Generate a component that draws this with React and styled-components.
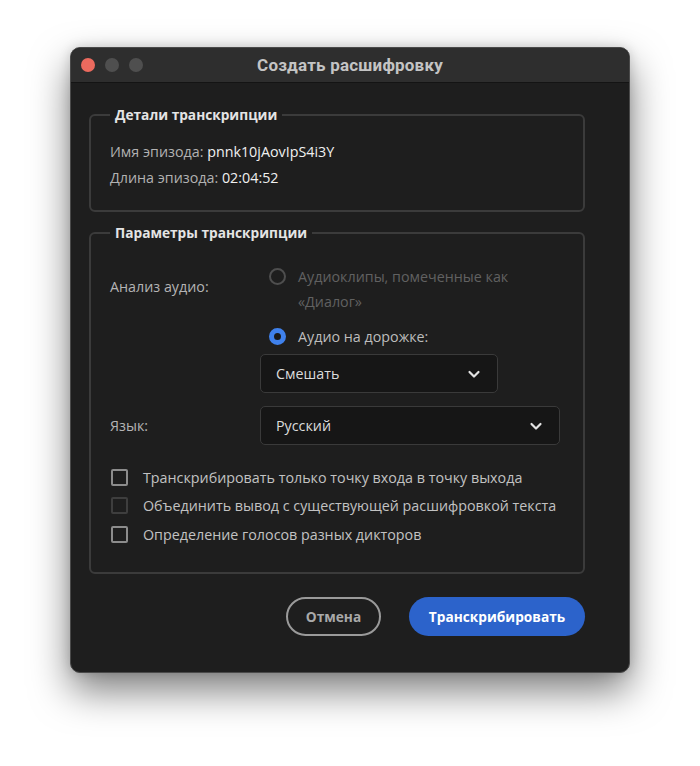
import React from 'react';
import styled, { createGlobalStyle } from 'styled-components';

const GlobalStyle = createGlobalStyle`
  html, body {
    margin: 0;
    background: #ffffff;
    font-family: "Open Sans", "Noto Sans", sans-serif;
  }
`;

const Chevron = () => (
  <svg width="14" height="14" viewBox="0 0 14 14" fill="none">
    <path d="M2.5 5 L7 9.5 L11.5 5" stroke="#e2e2e2" strokeWidth="2.2" strokeLinecap="round" strokeLinejoin="round" />
  </svg>
);

const App = () => (
  <Page>
    <GlobalStyle />
    <Window>
      <TitleBar>
        <Lights>
          <Light color="#ec6a5e" />
          <Light color="#4f4f4f" />
          <Light color="#4f4f4f" />
        </Lights>
        <Title>Создать расшифровку</Title>
      </TitleBar>
      <Body>
        <Group>
          <Legend>Детали транскрипции</Legend>
          <Details>
            <InfoLine>
              Имя эпизода: <Value>pnnk10jAovIpS4i3Y</Value>
            </InfoLine>
            <InfoLine>
              Длина эпизода: <Value>02:04:52</Value>
            </InfoLine>
          </Details>
        </Group>

        <Group params>
          <Legend>Параметры транскрипции</Legend>
          <FormGrid>
            <Label top>Анализ аудио:</Label>
            <Options>
              <Radio disabled>
                <RadioDot disabled />
                <RadioText disabled>
                  Аудиоклипы, помеченные как
                  <br />
                  «Диалог»
                </RadioText>
              </Radio>
              <Radio>
                <RadioDot checked />
                <RadioText>Аудио на дорожке:</RadioText>
              </Radio>
              <Select width={238}>
                <span>Смешать</span>
                <Chevron />
              </Select>
            </Options>
            <Label>Язык:</Label>
            <Select width={300}>
              <span>Русский</span>
              <Chevron />
            </Select>
          </FormGrid>
          <Checks>
            <CheckRow>
              <Box />
              <CheckText>Транскрибировать только точку входа в точку выхода</CheckText>
            </CheckRow>
            <CheckRow>
              <Box disabled />
              <CheckText>Объединить вывод с существующей расшифровкой текста</CheckText>
            </CheckRow>
            <CheckRow>
              <Box />
              <CheckText>Определение голосов разных дикторов</CheckText>
            </CheckRow>
          </Checks>
        </Group>

        <Buttons>
          <GhostButton>Отмена</GhostButton>
          <PrimaryButton>Транскрибировать</PrimaryButton>
        </Buttons>
      </Body>
    </Window>
  </Page>
);

const Page = styled.div`
  padding: 47px 0 0 70px;
  height: 766px;
  box-sizing: border-box;
`;

const Window = styled.div`
  width: 560px;
  height: 626px;
  box-sizing: border-box;
  background: #1e1e1e;
  border: 1px solid #4a4a4a;
  border-radius: 10px;
  overflow: hidden;
  box-shadow: 0 18px 38px rgba(0, 0, 0, 0.5), 0 0 12px rgba(0, 0, 0, 0.15);
  display: flex;
  flex-direction: column;
`;

const TitleBar = styled.div`
  height: 34px;
  flex-shrink: 0;
  background: #2e2e2e;
  border-bottom: 1px solid #141414;
  display: grid;
  grid-template-columns: 1fr auto 1fr;
  align-items: center;
`;

const Lights = styled.div`
  display: flex;
  gap: 10px;
  padding-left: 10px;
`;

const Light = styled.span`
  width: 14px;
  height: 14px;
  border-radius: 50%;
  background: ${({ color }) => color};
`;

const Title = styled.div`
  font-family: Roboto, "Noto Sans", sans-serif;
  font-weight: 700;
  font-size: 17px;
  color: #c4c4c4;
  letter-spacing: 0.2px;
`;

const Body = styled.div`
  padding: 23px 44px 0 18px;
  display: flex;
  flex-direction: column;
`;

const Group = styled.fieldset`
  margin: ${({ params }) => (params ? '12px 0 0' : '0')};
  padding: ${({ params }) => (params ? '0 19px 23px 19px' : '0 19px 19px 19px')};
  border: 2px solid #3b3b3b;
  border-radius: 6px;
  min-width: 0;
`;

const Legend = styled.legend`
  padding: 0 5px;
  font-weight: 700;
  font-size: 13.7px;
  line-height: 18px;
  color: #e4e4e4;
`;

const Details = styled.div`
  padding-top: 15px;
`;

const InfoLine = styled.div`
  font-size: 14.3px;
  line-height: 26px;
  color: #b2b2b2;
`;

const Value = styled.span`
  color: #f0f0f0;
`;

const FormGrid = styled.div`
  display: grid;
  grid-template-columns: 150px auto;
  row-gap: 13px;
  align-items: center;
  padding-top: 22px;
`;

const Label = styled.div`
  font-size: 14.3px;
  line-height: 25px;
  color: #b4b4b4;
  align-self: ${({ top }) => (top ? 'start' : 'center')};
  padding-top: ${({ top }) => (top ? '10px' : '0')};
`;

const Options = styled.div`
  display: flex;
  flex-direction: column;
  align-items: flex-start;
`;

const Radio = styled.div`
  display: flex;
  align-items: flex-start;
  gap: 12px;
  margin-left: 9px;
  margin-bottom: ${({ disabled }) => (disabled ? '10px' : '5px')};
`;

const RadioDot = styled.span`
  width: 17px;
  height: 17px;
  margin-top: 4px;
  flex-shrink: 0;
  box-sizing: border-box;
  border-radius: 50%;
  border: ${({ checked, disabled }) =>
    checked ? '5.5px solid #3f81ec' : `2px solid ${disabled ? '#4e4e4e' : '#8a8a8a'}`};
  background: ${({ checked }) => (checked ? '#1a1a1a' : 'transparent')};
`;

const RadioText = styled.span`
  font-size: 14.3px;
  line-height: 25px;
  color: ${({ disabled }) => (disabled ? '#616161' : '#bdbdbd')};
`;

const Select = styled.div`
  width: ${({ width }) => width}px;
  height: 39px;
  box-sizing: border-box;
  padding: 0 16px 0 15px;
  background: #161616;
  border: 1px solid #3a3a3a;
  border-radius: 5px;
  display: flex;
  align-items: center;
  justify-content: space-between;
  font-size: 14.3px;
  color: #dcdcdc;
`;

const Checks = styled.div`
  display: flex;
  flex-direction: column;
  padding-top: 18px;
`;

const CheckRow = styled.div`
  display: flex;
  align-items: center;
  gap: 15px;
  height: 28.5px;
  padding-left: 1px;
`;

const Box = styled.span`
  width: 17px;
  height: 17px;
  box-sizing: border-box;
  border: 2px solid ${({ disabled }) => (disabled ? '#3e3e3e' : '#8c8c8c')};
  border-radius: 2px;
  flex-shrink: 0;
`;

const CheckText = styled.span`
  font-size: 14.3px;
  color: #c2c2c2;
  white-space: nowrap;
`;

const Buttons = styled.div`
  display: flex;
  justify-content: flex-end;
  gap: 28px;
  margin-top: 23px;
`;

const PillButton = styled.button`
  height: 39px;
  border-radius: 20px;
  font-family: "Open Sans", "Noto Sans", sans-serif;
  font-weight: 700;
  font-size: 13.7px;
  cursor: pointer;
`;

const GhostButton = styled(PillButton)`
  width: 95px;
  background: transparent;
  border: 2px solid #9a9a9a;
  color: #a9a9a9;
`;

const PrimaryButton = styled(PillButton)`
  width: 176px;
  background: #2c63cb;
  border: none;
  color: #ffffff;
`;

export default App;
